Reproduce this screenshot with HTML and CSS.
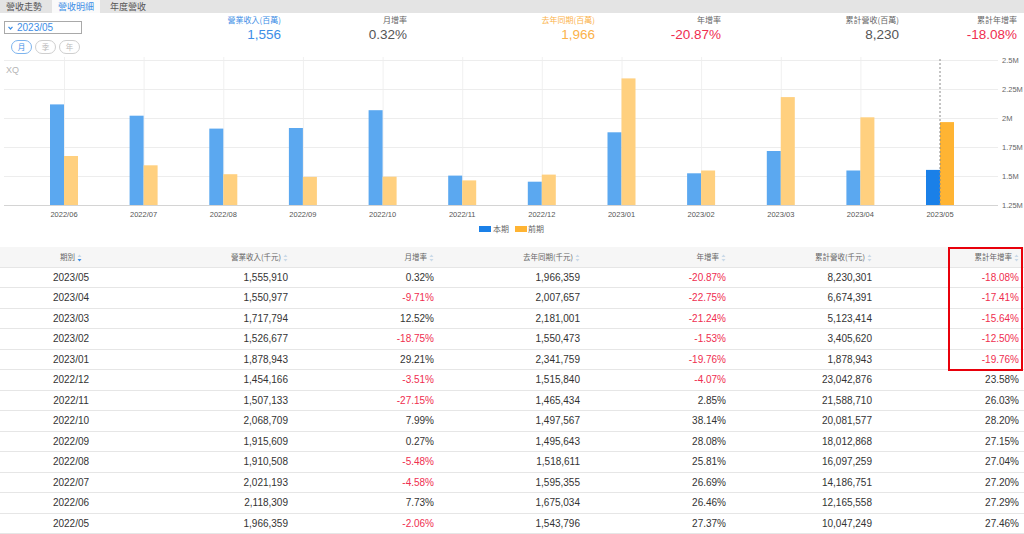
FILE: index.html
```html
<!DOCTYPE html>
<html lang="zh-Hant">
<head>
<meta charset="utf-8">
<title>營收明細</title>
<link rel="stylesheet" href="styles.css">
</head>
<body>
<div class="tabs">
  <div class="tab">營收走勢</div>
  <div class="tab active">營收明細</div>
  <div class="tab">年度營收</div>
</div>
<div class="top">
  <div class="controls">
    <div class="select">
      <svg class="caret" width="5" height="4" viewBox="0 0 5 4"><path d="M0.5 0.8 L2.5 3 L4.5 0.8" fill="none" stroke="#3d8ee6" stroke-width="1.2"/></svg>
      <span>2023/05</span>
    </div>
    <div class="pills">
      <span class="pill on">月</span><span class="pill">季</span><span class="pill">年</span>
    </div>
  </div>
  <div class="stats">
    <div class="stat"><div class="lbl blue">營業收入(百萬)</div><div class="val blue">1,556</div></div>
    <div class="stat"><div class="lbl">月增率</div><div class="val">0.32%</div></div>
    <div class="stat"><div class="lbl orange">去年同期(百萬)</div><div class="val orange">1,966</div></div>
    <div class="stat"><div class="lbl">年增率</div><div class="val red">-20.87%</div></div>
    <div class="stat"><div class="lbl">累計營收(百萬)</div><div class="val">8,230</div></div>
    <div class="stat"><div class="lbl">累計年增率</div><div class="val red">-18.08%</div></div>
  </div>
</div>
<svg class="chart" width="1024" height="192" viewBox="0 0 1024 192">
  <g stroke="#f0f0f0" stroke-width="1">
    <line x1="64.5" y1="2" x2="64.5" y2="150"/>
    <line x1="144.1" y1="2" x2="144.1" y2="150"/>
    <line x1="223.8" y1="2" x2="223.8" y2="150"/>
    <line x1="303.4" y1="2" x2="303.4" y2="150"/>
    <line x1="383.1" y1="2" x2="383.1" y2="150"/>
    <line x1="462.7" y1="2" x2="462.7" y2="150"/>
    <line x1="542.3" y1="2" x2="542.3" y2="150"/>
    <line x1="622" y1="2" x2="622" y2="150"/>
    <line x1="701.6" y1="2" x2="701.6" y2="150"/>
    <line x1="781.3" y1="2" x2="781.3" y2="150"/>
    <line x1="860.9" y1="2" x2="860.9" y2="150"/>
  </g>
  <g stroke="#ededed" stroke-width="1">
    <line x1="4" y1="5.5" x2="998" y2="5.5"/>
    <line x1="4" y1="34.5" x2="998" y2="34.5"/>
    <line x1="4" y1="63.5" x2="998" y2="63.5"/>
    <line x1="4" y1="92.5" x2="998" y2="92.5"/>
    <line x1="4" y1="121.5" x2="998" y2="121.5"/>
  </g>
  <text class="xq" x="6" y="17.5">XQ</text>
  <g fill="#5ba8f0">
    <rect x="50" y="49.4" width="14" height="101.1"/>
    <rect x="129.6" y="60.7" width="14" height="89.8"/>
    <rect x="209.3" y="73.6" width="14" height="76.9"/>
    <rect x="288.9" y="73" width="14" height="77.5"/>
    <rect x="368.6" y="55.2" width="14" height="95.3"/>
    <rect x="448.2" y="120.6" width="14" height="29.9"/>
    <rect x="527.8" y="126.7" width="14" height="23.8"/>
    <rect x="607.5" y="77.3" width="14" height="73.2"/>
    <rect x="687.1" y="118.3" width="14" height="32.2"/>
    <rect x="766.8" y="96" width="14" height="54.5"/>
    <rect x="846.4" y="115.5" width="14" height="35"/>
  </g>
  <g fill="#ffd07f">
    <rect x="64" y="101" width="14" height="49.5"/>
    <rect x="143.6" y="110.3" width="14" height="40.2"/>
    <rect x="223.3" y="119.2" width="14" height="31.3"/>
    <rect x="302.9" y="121.9" width="14" height="28.6"/>
    <rect x="382.6" y="121.7" width="14" height="28.8"/>
    <rect x="462.2" y="125.4" width="14" height="25.1"/>
    <rect x="541.8" y="119.6" width="14" height="30.9"/>
    <rect x="621.5" y="23.4" width="14" height="127.1"/>
    <rect x="701.1" y="115.5" width="14" height="35"/>
    <rect x="780.8" y="42.1" width="14" height="108.4"/>
    <rect x="860.4" y="62.3" width="14" height="88.2"/>
  </g>
  <rect x="926" y="114.9" width="14" height="35.6" fill="#1a80e8"/>
  <rect x="940" y="67.1" width="14" height="83.4" fill="#ffb433"/>
  <line x1="940" y1="4" x2="940" y2="150" stroke="#8a8a8a" stroke-width="1" stroke-dasharray="2 2"/>
  <line x1="4" y1="150.5" x2="998" y2="150.5" stroke="#d4d4d4" stroke-width="1"/>
  <g class="ylab">
    <text x="1002" y="5" dy="0.35em">2.5M</text>
    <text x="1002" y="34.1" dy="0.35em">2.25M</text>
    <text x="1002" y="63.2" dy="0.35em">2M</text>
    <text x="1002" y="92.3" dy="0.35em">1.75M</text>
    <text x="1002" y="121.4" dy="0.35em">1.5M</text>
    <text x="1002" y="150.5" dy="0.35em">1.25M</text>
  </g>
  <g class="xlab">
    <text x="64" y="159" dy="0.35em">2022/06</text>
    <text x="143.6" y="159" dy="0.35em">2022/07</text>
    <text x="223.3" y="159" dy="0.35em">2022/08</text>
    <text x="302.9" y="159" dy="0.35em">2022/09</text>
    <text x="382.6" y="159" dy="0.35em">2022/10</text>
    <text x="462.2" y="159" dy="0.35em">2022/11</text>
    <text x="541.8" y="159" dy="0.35em">2022/12</text>
    <text x="621.5" y="159" dy="0.35em">2023/01</text>
    <text x="701.1" y="159" dy="0.35em">2023/02</text>
    <text x="780.8" y="159" dy="0.35em">2023/03</text>
    <text x="860.4" y="159" dy="0.35em">2023/04</text>
    <text x="940" y="159" dy="0.35em">2023/05</text>
  </g>
  <rect x="479" y="171" width="12" height="6" fill="#1a80e8"/>
  <text class="leg" x="493" y="174" dy="0.35em">本期</text>
  <rect x="515" y="171" width="12" height="6" fill="#ffb433"/>
  <text class="leg" x="528" y="174" dy="0.35em">前期</text>
</svg>
<div class="table-wrap">
  <table class="grid">
    <colgroup>
      <col class="c1"><col class="cn"><col class="cn"><col class="cn"><col class="cn"><col class="cn"><col class="cl">
    </colgroup>
    <thead>
      <tr>
        <th class="center">期別<svg class="sort" width="5" height="8" viewBox="0 0 5 8"><path d="M2.5 0.5 L4.5 3 L0.5 3 Z" fill="#c9d9e8"/><path d="M0.5 5 L4.5 5 L2.5 7.5 Z" fill="#3d8ee6"/></svg></th>
        <th>營業收入(千元)<svg class="sort" width="5" height="8" viewBox="0 0 5 8"><path d="M2.5 0.5 L4.5 3 L0.5 3 Z" fill="#c9d9e8"/><path d="M0.5 5 L4.5 5 L2.5 7.5 Z" fill="#c9d9e8"/></svg></th>
        <th>月增率<svg class="sort" width="5" height="8" viewBox="0 0 5 8"><path d="M2.5 0.5 L4.5 3 L0.5 3 Z" fill="#c9d9e8"/><path d="M0.5 5 L4.5 5 L2.5 7.5 Z" fill="#c9d9e8"/></svg></th>
        <th>去年同期(千元)<svg class="sort" width="5" height="8" viewBox="0 0 5 8"><path d="M2.5 0.5 L4.5 3 L0.5 3 Z" fill="#c9d9e8"/><path d="M0.5 5 L4.5 5 L2.5 7.5 Z" fill="#c9d9e8"/></svg></th>
        <th>年增率<svg class="sort" width="5" height="8" viewBox="0 0 5 8"><path d="M2.5 0.5 L4.5 3 L0.5 3 Z" fill="#c9d9e8"/><path d="M0.5 5 L4.5 5 L2.5 7.5 Z" fill="#c9d9e8"/></svg></th>
        <th>累計營收(千元)<svg class="sort" width="5" height="8" viewBox="0 0 5 8"><path d="M2.5 0.5 L4.5 3 L0.5 3 Z" fill="#c9d9e8"/><path d="M0.5 5 L4.5 5 L2.5 7.5 Z" fill="#c9d9e8"/></svg></th>
        <th>累計年增率<svg class="sort" width="5" height="8" viewBox="0 0 5 8"><path d="M2.5 0.5 L4.5 3 L0.5 3 Z" fill="#c9d9e8"/><path d="M0.5 5 L4.5 5 L2.5 7.5 Z" fill="#c9d9e8"/></svg></th>
      </tr>
    </thead>
    <tbody>
      <tr><td class="center">2023/05</td><td>1,555,910</td><td>0.32%</td><td>1,966,359</td><td class="red">-20.87%</td><td>8,230,301</td><td class="red">-18.08%</td></tr>
      <tr><td class="center">2023/04</td><td>1,550,977</td><td class="red">-9.71%</td><td>2,007,657</td><td class="red">-22.75%</td><td>6,674,391</td><td class="red">-17.41%</td></tr>
      <tr><td class="center">2023/03</td><td>1,717,794</td><td>12.52%</td><td>2,181,001</td><td class="red">-21.24%</td><td>5,123,414</td><td class="red">-15.64%</td></tr>
      <tr><td class="center">2023/02</td><td>1,526,677</td><td class="red">-18.75%</td><td>1,550,473</td><td class="red">-1.53%</td><td>3,405,620</td><td class="red">-12.50%</td></tr>
      <tr><td class="center">2023/01</td><td>1,878,943</td><td>29.21%</td><td>2,341,759</td><td class="red">-19.76%</td><td>1,878,943</td><td class="red">-19.76%</td></tr>
      <tr><td class="center">2022/12</td><td>1,454,166</td><td class="red">-3.51%</td><td>1,515,840</td><td class="red">-4.07%</td><td>23,042,876</td><td>23.58%</td></tr>
      <tr><td class="center">2022/11</td><td>1,507,133</td><td class="red">-27.15%</td><td>1,465,434</td><td>2.85%</td><td>21,588,710</td><td>26.03%</td></tr>
      <tr><td class="center">2022/10</td><td>2,068,709</td><td>7.99%</td><td>1,497,567</td><td>38.14%</td><td>20,081,577</td><td>28.20%</td></tr>
      <tr><td class="center">2022/09</td><td>1,915,609</td><td>0.27%</td><td>1,495,643</td><td>28.08%</td><td>18,012,868</td><td>27.15%</td></tr>
      <tr><td class="center">2022/08</td><td>1,910,508</td><td class="red">-5.48%</td><td>1,518,611</td><td>25.81%</td><td>16,097,259</td><td>27.04%</td></tr>
      <tr><td class="center">2022/07</td><td>2,021,193</td><td class="red">-4.58%</td><td>1,595,355</td><td>26.69%</td><td>14,186,751</td><td>27.20%</td></tr>
      <tr><td class="center">2022/06</td><td>2,118,309</td><td>7.73%</td><td>1,675,034</td><td>26.46%</td><td>12,165,558</td><td>27.29%</td></tr>
      <tr><td class="center">2022/05</td><td>1,966,359</td><td class="red">-2.06%</td><td>1,543,796</td><td>27.37%</td><td>10,047,249</td><td>27.46%</td></tr>
    </tbody>
  </table>
  <div class="highlight"></div>
</div>
</body>
</html>
```
FILE: styles.css
```css
* { box-sizing: border-box; }
html, body { margin: 0; padding: 0; background: #fff; }
body {
  width: 1024px;
  height: 534px;
  overflow: hidden;
  font-family: "Liberation Sans", "Noto Sans CJK TC", sans-serif;
  color: #333;
}

/* tabs */
.tabs {
  display: flex;
  gap: 4px;
  height: 13px;
  background: #e4e4e4;
}
.tab {
  padding: 0 6px;
  font-family: "Noto Sans CJK TC", sans-serif;
  font-size: 9px;
  line-height: 13px;
  color: #555;
}
.tab.active {
  background: #fafafa;
  color: #3d8ee6;
}

/* top controls + stats */
.top {
  display: flex;
  height: 42px;
}
.controls {
  width: 90px;
  padding-left: 4px;
  padding-top: 8px;
}
.select {
  display: flex;
  align-items: center;
  gap: 4px;
  width: 78px;
  height: 13px;
  padding-left: 3px;
  border: 1px solid #a9a9a9;
  font-size: 10px;
  line-height: 11px;
  color: #3d8ee6;
}
.caret { display: block; }
.pills {
  display: flex;
  gap: 3px;
  margin-top: 6px;
  margin-left: 7px;
}
.pill {
  width: 21px;
  height: 14px;
  border: 1px solid #cfcfcf;
  border-radius: 7px;
  font-family: "Noto Sans CJK TC", sans-serif;
  font-size: 7.5px;
  line-height: 12px;
  text-align: center;
  color: #bbb;
}
.pill.on {
  border-color: #7db4ee;
  color: #3d8ee6;
}
.stats {
  display: grid;
  grid-template-columns: 191px 126px 188px 126px 178px 118px;
  padding-top: 2px;
}
.stat { text-align: right; }
.lbl {
  font-family: "Noto Sans CJK TC", sans-serif;
  font-size: 8px;
  line-height: 10px;
  color: #666;
}
.val {
  margin-top: 1.5px;
  font-size: 13.5px;
  line-height: 15px;
  color: #555;
}
.blue { color: #3d8ee6; }
.orange { color: #fbb24a; }
.red { color: #ef2d4f; }

/* chart */
.chart { display: block; }
.xq {
  font-family: "Liberation Sans", sans-serif;
  font-size: 9px;
  fill: #b5b5b5;
}
.ylab text {
  font-family: "Liberation Sans", sans-serif;
  font-size: 7.5px;
  fill: #666;
}
.xlab text {
  font-family: "Liberation Sans", sans-serif;
  font-size: 7.5px;
  fill: #555;
  text-anchor: middle;
}
.leg {
  font-family: "Noto Sans CJK TC", sans-serif;
  font-size: 8px;
  fill: #666;
}

/* table */
.table-wrap { position: relative; }
.grid {
  width: 1024px;
  table-layout: fixed;
  border-collapse: collapse;
}
.c1 { width: 142px; }
.cn { width: 146px; }
.cl { width: 152px; }
.grid th {
  height: 20px;
  padding: 0;
  background: #f6f6f6;
  border-bottom: 1px solid #e6e6e6;
  font-family: "Noto Sans CJK TC", sans-serif;
  font-size: 7.5px;
  font-weight: normal;
  color: #666;
  text-align: right;
  white-space: nowrap;
}
.grid td {
  height: 20.5px;
  padding: 0;
  border-bottom: 1px solid #e6e6e6;
  font-size: 10px;
  text-align: right;
  white-space: nowrap;
}
.grid th:last-child, .grid td:last-child { padding-right: 5px; }
.grid td.red { color: #ef2d4f; }
.grid .center { text-align: center; }
.sort {
  margin-left: 2px;
  vertical-align: middle;
}
.highlight {
  position: absolute;
  left: 948px;
  top: 0;
  width: 75px;
  height: 124px;
  border: 2px solid #e8000b;
}
```
